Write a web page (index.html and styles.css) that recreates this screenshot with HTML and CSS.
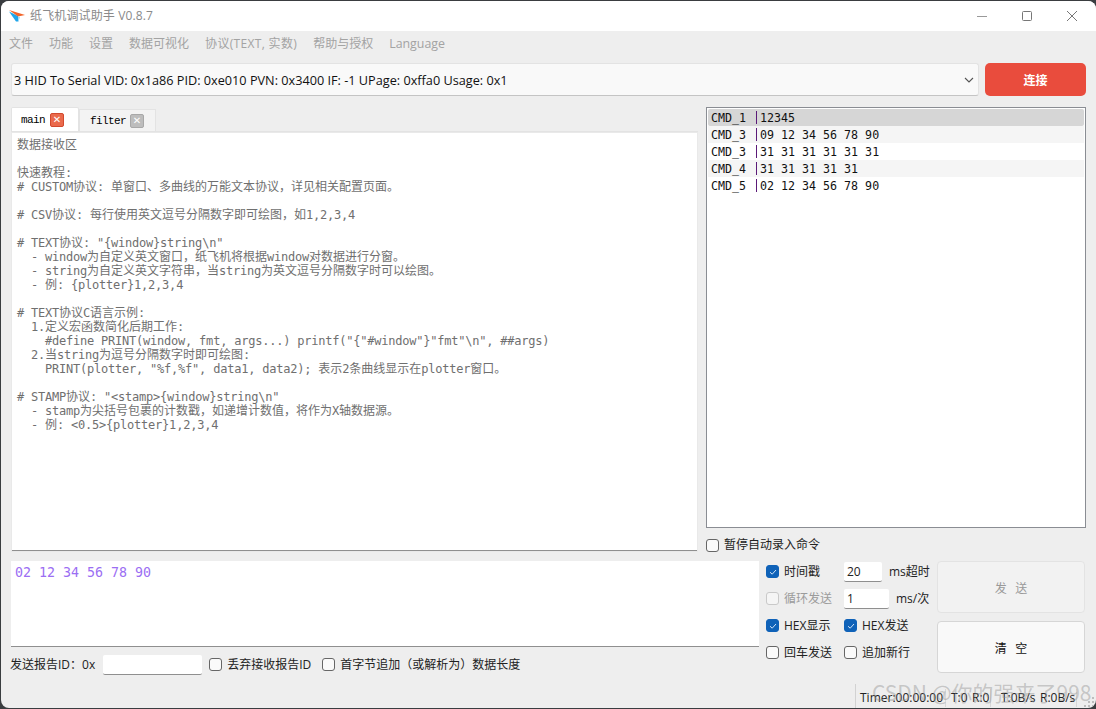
FILE: index.html
```html
<!DOCTYPE html>
<html lang="zh-CN">
<head>
<meta charset="utf-8">
<title>纸飞机调试助手</title>
<link rel="stylesheet" href="styles.css">
</head>
<body>
<div class="window">
  <header class="titlebar">
    <svg class="logo" width="16" height="12" viewBox="0 0 16 12"><polygon points="0,1.5 9,6 9.5,11.5 7,11.5" fill="#1fa5ea"/><polygon points="0,0 16,5 9,6.5" fill="#f2642a"/><polygon points="9,6.5 9.5,11.5 11,7" fill="#9fd6ee"/></svg>
    <span class="title">纸飞机调试助手 V0.8.7</span>
    <div class="winbtns">
      <svg width="12" height="12" viewBox="0 0 12 12"><path d="M1 6.5H11" stroke="#999" fill="none"/></svg>
      <svg width="12" height="12" viewBox="0 0 12 12"><rect x="1.5" y="1.5" width="9" height="9" rx="1" stroke="#777" fill="none"/></svg>
      <svg width="12" height="12" viewBox="0 0 12 12"><path d="M1 1L11 11M11 1L1 11" stroke="#777" fill="none"/></svg>
    </div>
  </header>
  <nav class="menubar">
    <span>文件</span><span>功能</span><span>设置</span><span>数据可视化</span><span class="proto">协议(TEXT, 实数)</span><span>帮助与授权</span><span class="lang">Language</span>
  </nav>
  <section class="portrow">
    <div class="combo">
      <span>3 HID To Serial VID: 0x1a86 PID: 0xe010 PVN: 0x3400 IF: -1 UPage: 0xffa0 Usage: 0x1</span>
      <svg width="10" height="6" viewBox="0 0 10 6"><path d="M1 1L5 5L9 1" stroke="#555" stroke-width="1.1" fill="none"/></svg>
    </div>
    <button class="connect">连接</button>
  </section>
  <section class="midrow">
    <div class="left">
      <div class="tabs">
        <div class="tab active">main<span class="close red">✕</span></div>
        <div class="tab">filter<span class="close gray">✕</span></div>
      </div>
      <pre class="recv">数据接收区

快速教程<span class="l">:</span>
<span class="l"># CUSTOM</span>协议<span class="l">: </span>单窗口、多曲线的万能文本协议&#xFF0C;详见相关配置页面。

<span class="l"># CSV</span>协议<span class="l">: </span>每行使用英文逗号分隔数字即可绘图&#xFF0C;如<span class="l">1,2,3,4</span>

<span class="l"># TEXT</span>协议<span class="l">: "{window}string\n"</span>
<span class="l">  - window</span>为自定义英文窗口&#xFF0C;纸飞机将根据<span class="l">window</span>对数据进行分窗。
<span class="l">  - string</span>为自定义英文字符串&#xFF0C;当<span class="l">string</span>为英文逗号分隔数字时可以绘图。
<span class="l">  - </span>例<span class="l">: {plotter}1,2,3,4</span>

<span class="l"># TEXT</span>协议<span class="l">C</span>语言示例<span class="l">:</span>
<span class="l">  1.</span>定义宏函数简化后期工作<span class="l">:</span>
<span class="l">    #define PRINT(window, fmt, args...) printf("{"#window"}"fmt"\n", ##args)</span>
<span class="l">  2.</span>当<span class="l">string</span>为逗号分隔数字时即可绘图<span class="l">:</span>
<span class="l">    PRINT(plotter, "%f,%f", data1, data2); </span>表示<span class="l">2</span>条曲线显示在<span class="l">plotter</span>窗口。

<span class="l"># STAMP</span>协议<span class="l">: "&lt;stamp&gt;{window}string\n"</span>
<span class="l">  - stamp</span>为尖括号包裹的计数戳&#xFF0C;如递增计数值&#xFF0C;将作为<span class="l">X</span>轴数据源。
<span class="l">  - </span>例<span class="l">: &lt;0.5&gt;{plotter}1,2,3,4</span></pre>
    </div>
    <div class="right">
      <ul class="cmds">
        <li class="sel"><span class="cname">CMD_1</span><span class="cval">12345</span></li>
        <li class="alt"><span class="cname">CMD_3</span><span class="cval">09 12 34 56 78 90</span></li>
        <li><span class="cname">CMD_3</span><span class="cval">31 31 31 31 31 31</span></li>
        <li class="alt"><span class="cname">CMD_4</span><span class="cval">31 31 31 31 31</span></li>
        <li><span class="cname">CMD_5</span><span class="cval">02 12 34 56 78 90</span></li>
      </ul>
      <label class="check pause"><i class="box"></i>暂停自动录入命令</label>
    </div>
  </section>
  <section class="sendrow">
    <div class="sendleft">
      <div class="sendbox">02 12 34 56 78 90</div>
      <div class="report">
        <span>发送报告ID&#xFF1A;0x</span>
        <span class="rid"></span>
        <label class="check"><i class="box"></i>丢弃接收报告ID</label>
        <label class="check second"><i class="box"></i>首字节追加&#xFF08;或解析为&#xFF09;数据长度</label>
      </div>
    </div>
    <div class="opts">
      <label class="check"><i class="box on"><svg width="10" height="10" viewBox="0 0 10 10"><path d="M2 5.2L4.2 7.2L8 3" stroke="#cfe2f7" fill="none"/></svg></i>时间戳</label>
      <div class="inline"><span class="field w38">20</span><span>ms超时</span></div>
      <label class="check off"><i class="box"></i>循环发送</label>
      <div class="inline"><span class="field w45">1</span><span>ms/次</span></div>
      <label class="check"><i class="box on"><svg width="10" height="10" viewBox="0 0 10 10"><path d="M2 5.2L4.2 7.2L8 3" stroke="#cfe2f7" fill="none"/></svg></i>HEX显示</label>
      <label class="check"><i class="box on"><svg width="10" height="10" viewBox="0 0 10 10"><path d="M2 5.2L4.2 7.2L8 3" stroke="#cfe2f7" fill="none"/></svg></i>HEX发送</label>
      <label class="check"><i class="box"></i>回车发送</label>
      <label class="check"><i class="box"></i>追加新行</label>
    </div>
    <div class="actions">
      <button class="act disabled">发 送</button>
      <button class="act">清 空</button>
    </div>
  </section>
  <footer class="status">
    <span class="timer">Timer:00:00:00</span><span class="tx">T:0</span><span class="rx">R:0</span><span class="rate">T:0B/s</span><span class="rrate">R:0B/s</span>
  </footer>
  <div class="watermark">CSDN @你的强来了998</div>
  <svg class="grip" width="11" height="11" viewBox="0 0 11 11" fill="#bdbdbd"><rect x="8" y="0" width="2" height="2"/><rect x="4" y="4" width="2" height="2"/><rect x="8" y="4" width="2" height="2"/><rect x="0" y="8" width="2" height="2"/><rect x="4" y="8" width="2" height="2"/><rect x="8" y="8" width="2" height="2"/></svg>
</div>
</body>
</html>
```
FILE: styles.css
```css
* { box-sizing: border-box; }
html, body { margin: 0; padding: 0; background: #3a3d40; }
body { width: 1096px; height: 709px; overflow: hidden; }
.window {
  position: relative;
  width: 1095px;
  height: 707px;
  margin-top: 1px;
  margin-left: 1px;
  background: #eeeeee;
  border-radius: 8px;
  overflow: hidden;
  display: flex;
  flex-direction: column;
  font: 12px/16px "Open Sans", "Noto Sans CJK SC", sans-serif;
  color: #222;
}
.titlebar { height: 30px; flex: none; background: #fff; display: flex; align-items: center; padding-left: 8px; }
.logo { margin-right: 5px; }
.title { color: #8a8a8a; font-size: 12px; letter-spacing: .13px; }
.winbtns { margin-left: auto; display: flex; gap: 33px; padding-right: 18px; }
.menubar { height: 25px; flex: none; display: flex; align-items: center; padding-left: 8px; gap: 16px; color: #a3a3a3; font-size: 12px; }
.menubar span { white-space: nowrap; }
.proto { letter-spacing: .33px; }
.lang { font-size: 12.4px; }
.portrow { flex: none; display: flex; gap: 6px; padding: 7px 9px 0 10px; height: 40px; }
.combo {
  width: 968px; height: 33px; background: #f9f9f9;
  border: 1px solid #e3e3e3; border-bottom-color: #c4c4c4; border-radius: 3px;
  display: flex; align-items: center; justify-content: space-between;
  padding: 0 4px 0 2px; font-size: 12.7px; color: #111; white-space: nowrap;
}
.connect {
  width: 101px; height: 33px; border: 0; border-radius: 5px;
  background: #e94c3d; color: #fff; font: 700 12px "Noto Sans CJK SC", sans-serif;
}
.midrow { flex: none; display: flex; align-items: flex-start; padding: 11px 9px 0 10px; height: 465px; gap: 8px; }
.left { width: 687px; height: 444px; flex: none; display: flex; flex-direction: column; }
.tabs { display: flex; height: 25px; flex: none; align-items: flex-end; border-bottom: 1px solid #e3e3e3; }
.tab {
  height: 22px; width: 77px; display: flex; align-items: center; gap: 4px; padding-left: 10px;
  background: #f3f3f3; border: 1px solid #e3e3e3; border-bottom: 0;
  font: 11px "Liberation Mono", monospace; letter-spacing: -.6px; color: #000;
}
.tab.active { height: 24px; width: 68px; background: #fff; border-radius: 2px 2px 0 0; padding-left: 9px; gap: 5px; }
.close {
  width: 14px; height: 14px; display: inline-flex; align-items: center; justify-content: center;
  color: #fff; font: 700 10px "DejaVu Sans", sans-serif; border-radius: 2px; letter-spacing: 0;
}
.close.red { background: #ea6a4c; border: 1px solid #d2492e; }
.close.gray { background: #bdbdbd; border: 1px solid #a8a8a8; }
.recv {
  margin: 1px 0 0 1px; flex: 1; width: 685px; background: #fff;
  border-bottom: 1px solid #8f8f8f; box-shadow: 0 0 0 1px #e9e9e9;
  padding: 5px; overflow: hidden;
  font: 12px/14px "DejaVu Sans Mono", "Noto Sans CJK SC", monospace; color: #6f6f6f;
}
.recv .l { letter-spacing: -.22px; }
.right { width: 380px; flex: none; display: flex; flex-direction: column; }
.cmds {
  list-style: none; margin: 0; padding: 1px; height: 421px; background: #fff;
  border: 1px solid #8a8d93;
  font: 11.65px/19px "DejaVu Sans Mono", monospace; color: #111;
}
.cmds li { height: 17px; padding-left: 3px; display: flex; white-space: pre; }
.cmds li.sel { background: #d6d6d6; border-radius: 2px; }
.cmds li.alt { background: #f5f5f5; }
.cname { width: 46px; position: relative; }
.cname::after { content: ""; position: absolute; right: 0; top: 2px; height: 13px; width: 1px; background: #5b1a78; }
.cval { padding-left: 3px; }
.check { display: inline-flex; align-items: center; gap: 5px; font-size: 12px; white-space: nowrap; color: #222; }
.box {
  width: 13px; height: 13px; border: 1px solid #666; border-radius: 3px; background: #fafafa;
  display: inline-flex; align-items: center; justify-content: center; flex: none;
}
.box.on { background: #0f62b8; border-color: #0f62b8; }
.check.off { color: #9b9b9b; }
.check.off .box { border-color: #c9c9c9; background: #f5f5f5; }
.pause { margin-top: 9px; height: 16px; }
.sendrow { flex: none; display: flex; height: 123px; padding-left: 10px; }
.sendleft { width: 748px; flex: none; display: flex; flex-direction: column; }
.sendbox {
  height: 86px; flex: none; background: #fff; border-bottom: 1px solid #8f8f8f;
  padding: 4px 4px; font: 13.3px/16px "DejaVu Sans Mono", monospace; color: #9b6ef3; white-space: pre;
}
.report { display: flex; align-items: center; height: 34px; padding-top: 1px; margin-left: -1px; font-size: 12px; white-space: nowrap; }
.rid { width: 99px; height: 20px; background: #fff; border-bottom: 1px solid #8f8f8f; margin-left: 8px; margin-right: 7px; border-radius: 2px; }
.check.second { margin-left: 11px; }
.opts {
  width: 178px; flex: none; display: grid; grid-template-columns: 78px 1fr;
  grid-auto-rows: 27px; align-items: center; padding-left: 7px; margin-top: -3px; height: 108px; align-content: start;
}
.inline { display: flex; align-items: center; }
.field { height: 20px; background: #fff; border-bottom: 1px solid #8f8f8f; font-size: 12px; line-height: 19px; padding-left: 3px; border-radius: 2px; display: block; }
.w38 { width: 38px; margin-right: 7px; }
.w45 { width: 45px; margin-right: 7px; }
.actions { width: 148px; flex: none; display: flex; flex-direction: column; gap: 8px; }
.act {
  width: 148px; height: 52px; background: #f9f9f9; border: 1px solid #d6d6d6; border-radius: 4px;
  font: 12px "Noto Sans CJK SC", sans-serif; word-spacing: 6px; color: #111;
}
.act.disabled { color: #999; background: #f2f2f2; border-color: #e3e3e3; }
.status {
  position: absolute; right: 0; bottom: 0; height: 24px; width: 241px;
  border-left: 1px solid #d2d2d2; display: flex; align-items: center; padding: 4px 0 0 4px;
  font-size: 12px; color: #222; white-space: nowrap;
}
.status span { height: 18px; line-height: 18px; flex: none; }
.timer { width: 86px; border-right: 1px solid #d8d8d8; margin-right: 5px; }
.tx { width: 21px; }
.rx { width: 19px; border-right: 1px solid #d8d8d8; margin-right: 10px; }
.rate { width: 39px; }
.rrate { width: 37px; border-right: 1px solid #d8d8d8; }
.watermark {
  position: absolute; left: 871px; top: 677px; white-space: nowrap;
  font: 21px/28px "Noto Sans CJK SC", sans-serif; color: rgba(140,140,140,.42);
}
.grip { position: absolute; right: 1px; bottom: 0; }
```
